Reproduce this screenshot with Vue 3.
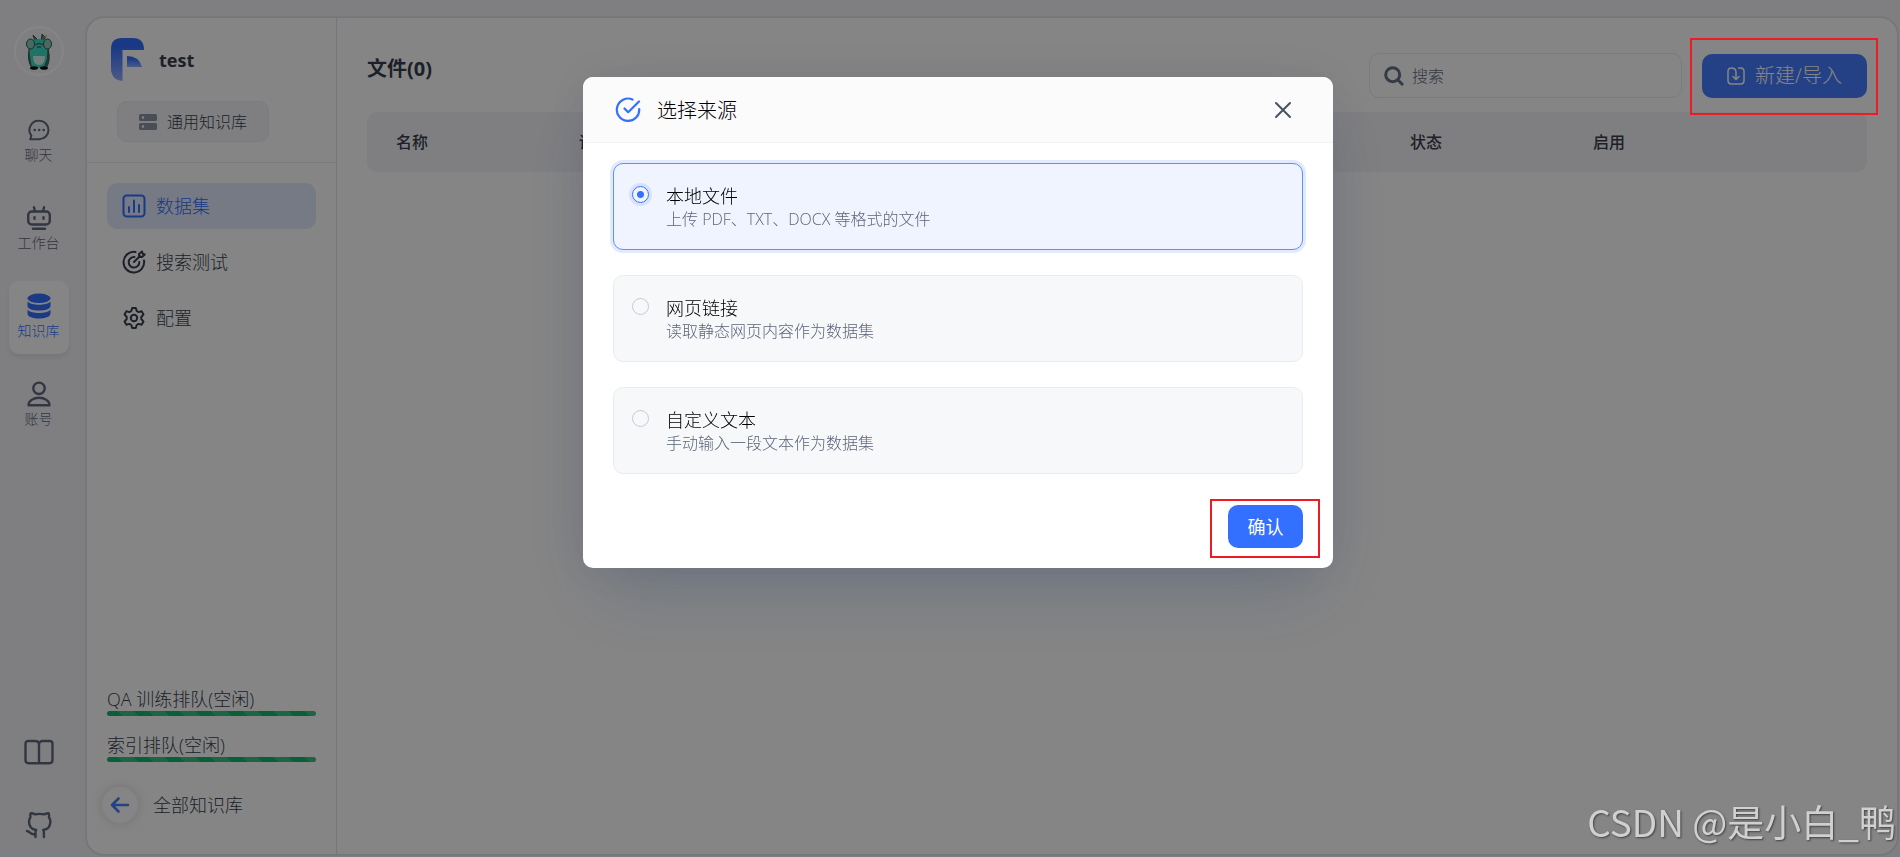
<script setup>
import { ref } from 'vue'

const rail = [
  { id: 'chat', label: '聊天' },
  { id: 'work', label: '工作台' },
  { id: 'data', label: '知识库', active: true },
  { id: 'user', label: '账号' }
]
const tabs = [
  { id: 'chart', label: '数据集', active: true },
  { id: 'target', label: '搜索测试' },
  { id: 'gear', label: '配置' }
]
const queues = ['QA 训练排队(空闲)', '索引排队(空闲)']
const columns = ['名称', '训练模式', '数据总量', '创建/更新时间', '状态', '启用', '']
const sources = [
  { id: 'local', title: '本地文件', desc: '上传 PDF、TXT、DOCX 等格式的文件' },
  { id: 'link', title: '网页链接', desc: '读取静态网页内容作为数据集' },
  { id: 'custom', title: '自定义文本', desc: '手动输入一段文本作为数据集' }
]
const selected = ref('local')
const keyword = ref('')
</script>

<template>
  <div class="app">
    <nav class="rail">
      <div class="avatar">
        <svg width="26" height="38" viewBox="0 0 26 38">
          <path d="M9 10 7 3l4 4 1 4M15 10l1-8 3 3-2 6" fill="#2b9d8f" stroke="#4b554e" stroke-width="1" />
          <path d="m18 5 3-2-2 5" fill="#c09a62" />
          <path d="M5 9q8-4 16 0l2 8q2 15-3 19H6Q1 32 3 17Z" fill="#36dcc3" />
          <ellipse cx="4.500" cy="12" rx="4" ry="5" fill="#8fc9bf" stroke="#35574f" />
          <ellipse cx="21.500" cy="12" rx="4" ry="5" fill="#8fc9bf" stroke="#35574f" />
          <path d="M22 17q3 12-2 19h-2q5-9 4-19ZM3 17q-2 12 3 19" fill="#287d72" stroke="#594b45" stroke-width="1" />
          <path d="M9 13q4-3 8 0M11 15h4" fill="none" stroke="#436d67" stroke-width="1.500" />
          <path d="M7 24h12q0 9-6 9t-6-9Z" fill="#d9f4ee" />
          <ellipse cx="8" cy="36" rx="4" ry="1.800" fill="#111" /><ellipse cx="18" cy="36" rx="4" ry="1.800" fill="#111" />
        </svg>
      </div>
      <div class="rail-items">
        <a v-for="r in rail" :key="r.id" href="#" class="rail-item" :class="{ active: r.active }">
          <svg v-if="r.id === 'chat'" width="26" height="26" viewBox="0 0 26 26" fill="none" stroke="currentColor" stroke-width="2">
            <path d="M13.300 3.800a9.200 9.200 0 1 1 0 18.400H4.200l1.200-3.600A9.200 9.200 0 0 1 13.300 3.800Z" stroke-linejoin="round" />
            <g fill="currentColor" stroke="none"><circle cx="8.700" cy="13" r="1.300" /><circle cx="13.200" cy="13" r="1.300" /><circle cx="17.700" cy="13" r="1.300" /></g>
          </svg>
          <svg v-else-if="r.id === 'work'" width="26" height="26" viewBox="0 0 26 26" fill="none" stroke="currentColor" stroke-width="2.400" stroke-linecap="round">
            <rect x="2.200" y="6.500" width="21.600" height="13" rx="3.600" />
            <path d="M8 2.200 8.800 6M18 2.200 17.200 6M7 23.800h12M8.500 12.200v1.600M17.500 12.200v1.600" />
          </svg>
          <svg v-else-if="r.id === 'data'" width="26" height="26" viewBox="0 0 26 26" fill="currentColor">
            <ellipse cx="13" cy="5.300" rx="11.500" ry="4.800" />
            <path d="M1.500 8.500c4 4.400 19 4.400 23 0v4.200c0 6.500-23 6.500-23 0Z" />
            <path d="M1.500 16.800c4 4.400 19 4.400 23 0v4c0 6.300-23 6.300-23 0Z" />
          </svg>
          <svg v-else width="26" height="26" viewBox="0 0 26 26" fill="none" stroke="currentColor" stroke-width="2.400" stroke-linejoin="round">
            <circle cx="13" cy="7.300" r="5.700" />
            <path d="M2.500 24.200c0-4.200 4.800-7.500 10.500-7.500s10.500 3.300 10.500 7.500Z" />
          </svg>
          <span>{{ r.label }}</span>
        </a>
      </div>
      <div class="rail-foot">
        <a href="#" aria-label="文档">
          <svg width="30" height="26" viewBox="0 0 30 26" fill="none" stroke="currentColor" stroke-width="2.400" stroke-linejoin="round">
            <path d="M15 24.200V5.500Q15 2 11 2H4.500Q1.500 2 1.500 5v16.200q0 3 3 3h21q3 0 3-3V5q0-3-3-3H19q-4 0-4 3.500" />
          </svg>
        </a>
        <a href="#" aria-label="GitHub">
          <svg width="28" height="28" viewBox="0 0 28 28" fill="none" stroke="currentColor" stroke-width="2.400" stroke-linecap="round" stroke-linejoin="round">
            <path d="M10.500 26v-4.500c0-1.400.2-2 .7-2.600C7.500 18.500 4 16 4 10.500c0-1.900.7-3.300 1.500-4.300-.3-1.200-.3-2.700.2-4 1.800 0 3.200.5 4.500 1.200a20 20 0 0 1 9 0c1.300-.7 2.700-1.200 4.500-1.200.5 1.300.5 2.800.2 4 .8 1 1.500 2.400 1.500 4.300 0 5.500-3.500 8-7.200 8.400.5.600.7 1.200.7 2.600V26M10.500 23c-5 1.500-5-2.500-8.500-3" />
          </svg>
        </a>
      </div>
    </nav>

    <div class="panel">
      <aside class="side">
        <header class="side-head">
          <div class="brand">
            <svg width="34" height="44" viewBox="0 0 34 44">
              <defs>
                <linearGradient id="brandFill" x1="0" y1="0" x2="0" y2="1"><stop offset="0.200" stop-color="#326dff" /><stop offset="1" stop-color="#8eaeff" /></linearGradient>
              </defs>
              <path d="M11 0h11q11 0 11 12H11.500v31Q0 42 0 30V11Q0 0 11 0Z" fill="url(#brandFill)" />
              <path d="M16 18q12 0 15 11H16Z" fill="url(#brandFill)" />
            </svg>
            <h1>test</h1>
          </div>
          <div class="tag">
            <svg width="18" height="16" viewBox="0 0 18 16"><rect width="18" height="7" rx="1.500" fill="#8a94a6" /><rect y="9" width="18" height="7" rx="1.500" fill="#8a94a6" /><circle cx="4" cy="3.500" r="1.200" fill="#fff" /><circle cx="4" cy="12.500" r="1.200" fill="#fff" /></svg>
            <span>通用知识库</span>
          </div>
        </header>
        <div class="tabs">
          <button v-for="t in tabs" :key="t.id" class="tab" :class="{ active: t.active }">
            <svg v-if="t.id === 'chart'" width="24" height="24" viewBox="0 0 24 24" fill="none" stroke="currentColor" stroke-width="2" stroke-linecap="round">
              <rect x="1.500" y="1.500" width="21" height="21" rx="3.200" /><path d="M7 13v5M12 6.500V18M17 11v7" />
            </svg>
            <svg v-else-if="t.id === 'target'" width="24" height="24" viewBox="0 0 24 24" fill="none" stroke="currentColor" stroke-width="2" stroke-linecap="round" stroke-linejoin="round">
              <path d="M13.500 2A10.300 10.300 0 1 0 22 10.500M12.500 7a5.300 5.300 0 1 0 4.800 5M12 12l6-6M17 7V4l3-2.500.7 2.300 2 .7L20 7Z" />
            </svg>
            <svg v-else width="24" height="24" viewBox="0 0 24 24" fill="none" stroke="currentColor" stroke-width="2" stroke-linejoin="round">
              <path d="M10.200 2h3.600l.9 3 1.900 1.100 3-.8 1.900 3.100L19.300 11v2l2.200 2.600-1.900 3.100-3-.8-1.900 1.100-.9 3h-3.600l-.9-3-1.900-1.100-3 .8-1.900-3.100L4.700 13v-2L2.500 8.400l1.900-3.100 3 .8L9.300 5Z" /><circle cx="12" cy="12" r="3.200" />
            </svg>
            <span>{{ t.label }}</span>
          </button>
        </div>
        <footer class="side-foot">
          <div v-for="q in queues" :key="q" class="queue"><span>{{ q }}</span><div class="bar"></div></div>
          <button class="back">
            <span class="back-icon">
              <svg width="20" height="18" viewBox="0 0 20 18" fill="none" stroke="currentColor" stroke-width="2.600" stroke-linecap="round" stroke-linejoin="round"><path d="M18 9H2M8.500 2.500 2 9l6.500 6.500" /></svg>
            </span>
            全部知识库
          </button>
        </footer>
      </aside>

      <main class="main">
        <div class="toolbar">
          <h2>文件(0)</h2>
          <label class="search">
            <svg width="20" height="20" viewBox="0 0 20 20" fill="none" stroke="currentColor" stroke-width="3"><circle cx="8.700" cy="8.700" r="7" /><path d="m13.500 13.500 5.500 5.500" /></svg>
            <input v-model="keyword" type="text" placeholder="搜索" aria-label="搜索" />
          </label>
          <button class="create">
            <svg width="18" height="18" viewBox="0 0 18 18" fill="none" stroke="currentColor" stroke-width="1.500" stroke-linecap="round" stroke-linejoin="round">
              <path d="M4.500 1Q1 1 1 4.500v9Q1 17 4.500 17h9q3.500 0 3.500-3.500v-9Q17 1 13.500 1h-2M4.500 1Q9 1 9 5.500V12M6 9.500l3 3 3-3" />
            </svg>
            新建/导入
          </button>
        </div>
        <table class="files">
          <thead><tr><th v-for="(c, i) in columns" :key="i" :class="'c' + i">{{ c }}</th></tr></thead>
        </table>
      </main>
    </div>

    <div class="overlay">
      <section class="modal" role="dialog" aria-modal="true" aria-labelledby="dialogTitle">
        <header class="modal-head">
          <svg width="26" height="26" viewBox="0 0 26 26" fill="none" stroke="#3370ff" stroke-width="2.200" stroke-linecap="round" stroke-linejoin="round">
            <path d="M17.500 2.500A11.200 11.200 0 1 0 24.200 12M9.500 11.500l3.700 3.700L24 4.500" />
          </svg>
          <h3 id="dialogTitle">选择来源</h3>
          <button class="close" aria-label="关闭">
            <svg width="18" height="18" viewBox="0 0 18 18" fill="none" stroke="currentColor" stroke-width="2" stroke-linecap="round"><path d="m2 2 14 14M16 2 2 16" /></svg>
          </button>
        </header>
        <div class="modal-body">
          <label v-for="s in sources" :key="s.id" class="option" :class="{ checked: selected === s.id }">
            <input v-model="selected" type="radio" name="source" :value="s.id" />
            <span class="option-text"><span class="option-title">{{ s.title }}</span><span class="option-desc">{{ s.desc }}</span></span>
          </label>
        </div>
        <footer class="modal-foot"><div class="marked"><button class="confirm">确认</button></div></footer>
      </section>
    </div>
    <div class="mark-create"></div>
    <div class="watermark">CSDN @是小白_鸭</div>
  </div>
</template>

<style>
body { margin: 0; background: #f4f4f7; }
</style>

<style scoped>
* { box-sizing: border-box; }
.app {
  position: relative; display: flex; height: 100vh; overflow: hidden; background: #f4f4f7; color: #383f50;
  font-family: "Open Sans", "Noto Sans CJK SC", sans-serif; font-size: 18px; font-weight: 300; line-height: 24px;
}
button { font: inherit; color: inherit; border: 0; background: none; padding: 0; cursor: pointer; }
a { color: inherit; text-decoration: none; }
h1, h2, h3 { margin: 0; }
svg { display: block; flex: none; }

.rail { display: flex; flex-direction: column; align-items: center; width: 86px; padding: 26px 17px 18px 8px; flex: none; color: #5f687b; }
.avatar { display: flex; align-items: center; justify-content: center; width: 50px; height: 50px; flex: none; border: 2px solid #fff; border-radius: 50%; }
.rail-items { display: flex; flex-direction: column; gap: 15px; margin-top: 29px; }
.rail-item { display: flex; flex-direction: column; align-items: center; width: 60px; height: 73px; padding-top: 12px; border-radius: 10px; font-size: 14px; line-height: 24px; }
.rail-item.active { background: #fff; color: #3370ff; box-shadow: 0 4px 5px rgba(19, 51, 107, 0.08); }
.rail-foot { display: flex; flex-direction: column; align-items: center; gap: 46px; margin-top: auto; }

.panel { display: flex; flex: 1; min-width: 0; margin: 17px 2px 2px 0; background: #fff; border: 1px solid #dfe2ea; border-radius: 18px; box-shadow: 0 0 2px rgba(19, 51, 107, 0.2); }
.side { display: flex; flex-direction: column; width: 250px; flex: none; border-right: 1px solid #dfe2ea; }
.side-head { padding: 20px 24px; border-bottom: 1px solid #e8ebf0; }
.brand { display: flex; align-items: center; gap: 14px; }
.brand h1 { font-size: 18px; font-weight: 700; }
.tag { display: flex; align-items: center; gap: 10px; width: 152px; height: 41px; margin: 19px 0 0 6px; padding: 0 21px; border: 1px solid #e8ebf0; border-radius: 10px; background: #f4f4f7; font-size: 16px; white-space: nowrap; }
.tabs { display: flex; flex-direction: column; gap: 10px; padding: 20px; }
.tab { display: flex; align-items: center; gap: 10px; height: 46px; padding: 0 15px; border-radius: 10px; text-align: left; }
.tab.active { background: #e1eaff; color: #3370ff; }
.side-foot { margin-top: auto; padding: 0 20px 31px; }
.queue { margin-bottom: 17px; }
.bar { height: 5px; border-radius: 3px; background: repeating-linear-gradient(45deg, #12b76a 0 11px, #38c183 11px 22px); }
.back { display: flex; align-items: center; gap: 15px; margin: 25px 0 0 -5px; }
.back-icon { display: flex; align-items: center; justify-content: center; width: 36px; height: 36px; border-radius: 50%; color: #487fff; background: #fff; box-shadow: 0 0 12px rgba(0, 0, 0, 0.15); }

.main { flex: 1; min-width: 0; padding: 35px 30px; }
.toolbar { display: flex; align-items: center; gap: 20px; }
.toolbar h2 { flex: 1; padding-bottom: 14px; font-size: 20px; font-weight: 700; }
.search { display: flex; align-items: center; gap: 8px; width: 313px; height: 45px; padding: 0 14px; border: 1px solid #e8ebf0; border-radius: 10px; color: #667085; }
.search input { flex: 1; min-width: 0; border: 0; outline: 0; padding: 0; background: none; font: inherit; font-size: 16px; color: inherit; }
.search input::placeholder { color: #667085; opacity: 1; }
.create { display: flex; align-items: center; justify-content: center; gap: 10px; width: 165px; height: 44px; border-radius: 10px; background: #487eff; color: #fff; font-size: 20px; }
.files { width: 100%; margin-top: 14px; border-spacing: 0; table-layout: fixed; }
.files th { height: 60px; padding: 0 0 0 29px; background: #f4f4f7; text-align: left; font-size: 16px; font-weight: 500; }
.files .c0, .files .c1, .files .c4, .files .c5 { width: 12.200%; }
.files .c6 { width: 8%; }
.files th:first-child { border-radius: 10px 0 0 10px; }
.files th:last-child { border-radius: 0 10px 10px 0; }

.overlay { position: fixed; inset: 0; display: flex; justify-content: center; align-items: flex-start; padding: 77px 0 0 16px; background: rgba(0, 0, 0, 0.48); }
.modal { width: 750px; background: #fff; border-radius: 10px; color: #000; box-shadow: 0 35px 70px -13px rgba(19, 51, 107, 0.2), 0 0 50px rgba(19, 51, 107, 0.08); }
.modal-head { display: flex; align-items: center; height: 66px; padding: 0 41px 0 32px; border-bottom: 1px solid #f2f3f5; border-radius: 10px 10px 0 0; background: #fbfbfc; }
.modal-head h3 { flex: 1; margin-left: 16px; padding-top: 2px; font-size: 20px; font-weight: 300; }
.close { color: #485264; }
.modal-body { display: flex; flex-direction: column; gap: 25px; padding: 20px 30px 0; }
.option { display: flex; gap: 17px; padding: 20px 18px 19px; border: 1px solid #e8ebf0; border-radius: 10px; background: #f7f8fa; }
.option.checked { border-color: #5e8fff; background: #f0f4ff; box-shadow: 0 0 0 3px #e1eaff; }
.option input { appearance: none; width: 17px; height: 17px; margin: 2px 0 0; flex: none; border: 1px solid #c4cbd7; border-radius: 50%; }
.option input:checked { border-color: #3370ff; background: radial-gradient(circle, #3370ff 3px, transparent 4px); box-shadow: 0 0 0 3px #d6e2ff; }
.option-text { display: flex; flex-direction: column; }
.option-desc { color: #5b6579; font-size: 16px; line-height: 22px; }
.modal-foot { display: flex; justify-content: flex-end; padding: 31px 30px 20px; }
.marked { position: relative; }
.marked::after { content: ""; position: absolute; inset: -6px -17px -10px -18px; border: 2px solid #ed1c24; pointer-events: none; }
.confirm { display: block; width: 75px; height: 43px; border-radius: 10px; background: #3370ff; color: #fff; font-weight: 400; }
.mark-create { position: absolute; top: 38px; right: 22px; width: 188px; height: 77px; border: 2px solid #ed1c24; pointer-events: none; }
.watermark { position: absolute; right: 4px; bottom: 14px; font-family: "Noto Sans CJK SC", sans-serif; font-size: 37px; font-weight: 400; line-height: 44px; color: #d0d0d0; text-shadow: 1px 1px 2px rgba(0, 0, 0, 0.5); white-space: nowrap; }
</style>
